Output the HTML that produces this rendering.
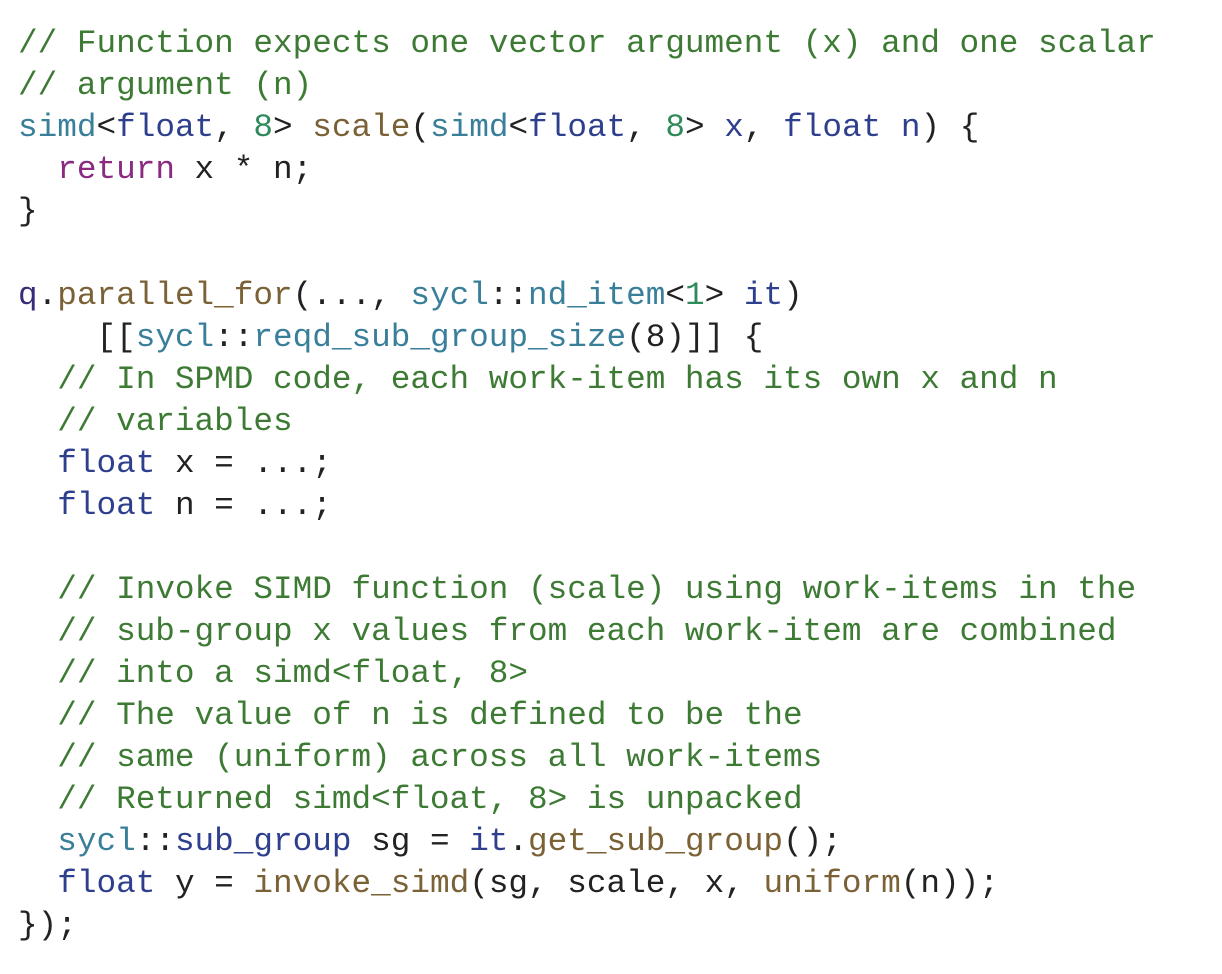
<!DOCTYPE html>
<html><head><style>
body{margin:0;background:#fff;width:1222px;height:974px;overflow:hidden}
pre{margin:0;position:absolute;left:18px;top:23px;font-family:"Liberation Mono",monospace;font-size:32.7px;line-height:42px;color:#222}
.c{color:#3d7a34}.t{color:#3a7f9a}.k{color:#2e3f8e}.n{color:#2e8a5a}.f{color:#7a6136}.r{color:#8a2a80}.q{color:#3a2a7a}
</style></head><body>
<pre><span class="c">// Function expects one vector argument (x) and one scalar
// argument (n)</span>
<span class="t">simd</span>&lt;<span class="k">float</span>, <span class="n">8</span>&gt; <span class="f">scale</span>(<span class="t">simd</span>&lt;<span class="k">float</span>, <span class="n">8</span>&gt; <span class="k">x</span>, <span class="k">float</span> <span class="k">n</span>) {
  <span class="r">return</span> x * n;
}

<span class="q">q</span>.<span class="f">parallel_for</span>(..., <span class="t">sycl</span>::<span class="t">nd_item</span>&lt;<span class="n">1</span>&gt; <span class="k">it</span>)
    [[<span class="t">sycl</span>::<span class="t">reqd_sub_group_size</span>(8)]] {
  <span class="c">// In SPMD code, each work-item has its own x and n
  // variables</span>
  <span class="k">float</span> x = ...;
  <span class="k">float</span> n = ...;

  <span class="c">// Invoke SIMD function (scale) using work-items in the
  // sub-group x values from each work-item are combined
  // into a simd&lt;float, 8&gt;
  // The value of n is defined to be the
  // same (uniform) across all work-items
  // Returned simd&lt;float, 8&gt; is unpacked</span>
  <span class="t">sycl</span>::<span class="k">sub_group</span> sg = <span class="k">it</span>.<span class="f">get_sub_group</span>();
  <span class="k">float</span> y = <span class="f">invoke_simd</span>(sg, scale, x, <span class="f">uniform</span>(n));
});</pre>
</body></html>
